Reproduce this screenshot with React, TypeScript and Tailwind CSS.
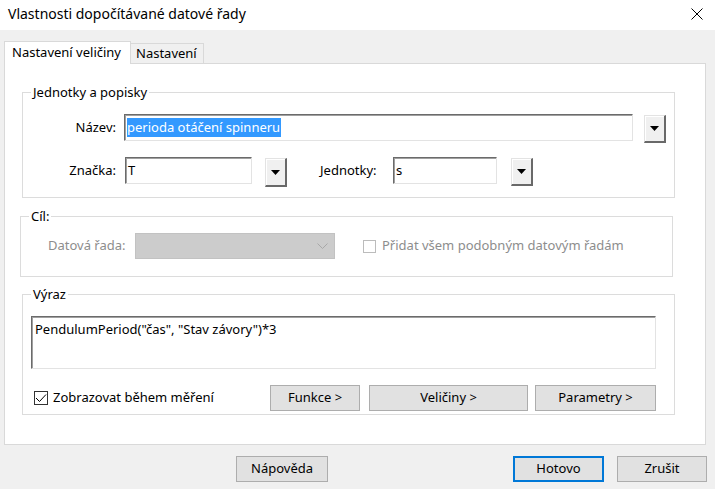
import React from "react";

const font = { fontFamily: '"Noto Sans", "Open Sans", Arial, sans-serif' };

function DropButton({ className = "" }: { className?: string }) {
  return (
    <div
      className={`w-[22px] h-[28px] bg-[#f0f0f0] border border-[#e3e3e3] border-r-[#696969] border-b-[#696969] border-r-2 border-b-2 shadow-[inset_1px_1px_0_#ffffff] flex items-center justify-center ${className}`}
    >
      <svg width="9" height="5" viewBox="0 0 9 5">
        <path d="M0 0 H9 L4.5 5 Z" fill="#000" />
      </svg>
    </div>
  );
}

function Input({ className = "", children }: { className?: string; children?: React.ReactNode }) {
  return (
    <div
      className={`h-[27px] bg-white border border-[#e3e3e3] border-t-[#6b6b6b] border-l-[#6b6b6b] shadow-[inset_1px_1px_0_#a0a0a0] flex items-center pl-[2px] text-[13px] text-black ${className}`}
    >
      {children}
    </div>
  );
}

function Btn({
  className = "",
  edge = "border border-[#adadad]",
  children,
}: {
  className?: string;
  edge?: string;
  children: React.ReactNode;
}) {
  return (
    <div
      className={`h-[26px] bg-[#e1e1e1] ${edge} flex items-center justify-center text-[13px] text-black ${className}`}
    >
      {children}
    </div>
  );
}

export default function App() {
  return (
    <div className="w-[715px] h-[489px] bg-[#f0f0f0] text-black overflow-hidden" style={font}>
      {/* title bar */}
      <div className="h-[30px] bg-white flex items-center justify-between pl-[8px] pr-[12px] pb-[4px]">
        <span className="text-[14px]">Vlastnosti dopočítávané datové řady</span>
        <svg width="12" height="12" viewBox="0 0 12 12" className="mt-[2px]">
          <path d="M0.5 0.5 L11.5 11.5 M11.5 0.5 L0.5 11.5" stroke="#000" strokeWidth="1" />
        </svg>
      </div>

      {/* tabs */}
      <div className="pl-[4px] pt-[10px]">
        <div className="flex items-end h-[23px]">
          <div className="relative z-10 h-[23px] -mb-px bg-white border border-[#d9d9d9] border-b-0 px-[7px] flex items-center text-[13px] w-[127px]">
            Nastavení veličiny
          </div>
          <div className="h-[20px] bg-[#f0f0f0] border border-[#d9d9d9] border-l-0 border-b-0 px-[5px] flex items-center text-[13px] w-[73px]">
            Nastavení
          </div>
        </div>

        {/* panel */}
        <div className="w-[702px] h-[382px] bg-white border border-[#d9d9d9] pt-[20px]">
          {/* Jednotky a popisky */}
          <fieldset className="ml-[17px] w-[653px] h-[114px] border border-[#dcdcdc] pt-[14px]">
            <legend className="ml-[8px] px-[2px] text-[13px] leading-[16px]">Jednotky a popisky</legend>
            <div className="flex items-start">
              <div className="w-[93px] h-[27px] flex items-center justify-end text-[13px]">Název:</div>
              <Input className="ml-[8px] w-[509px]">
                <span className="bg-[#3399ff] text-white leading-[19px] pr-[1px]">perioda otáčení spinneru</span>
              </Input>
              <DropButton className="ml-[11px] mt-[1px]" />
            </div>
            <div className="flex items-start mt-[14px]">
              <div className="w-[93px] h-[27px] flex items-center justify-end text-[13px]">Značka:</div>
              <Input className="ml-[9px] w-[127px]">T</Input>
              <DropButton className="ml-[13px] mt-[1px] h-[29px]" />
              <div className="ml-[33px] w-[73px] h-[27px] flex items-center text-[13px]">Jednotky:</div>
              <Input className="w-[104px]">s</Input>
              <DropButton className="ml-[14px] mt-[1px]" />
            </div>
          </fieldset>

          {/* Cíl */}
          <fieldset className="mt-[10px] ml-[15px] w-[653px] h-[69px] border border-[#dcdcdc] pt-[9px]">
            <legend className="ml-[8px] px-[2px] text-[13px] leading-[16px]">Cíl:</legend>
            <div className="flex items-center">
              <div className="ml-[27px] w-[87px] text-[13px] text-[#8d8d8d]">Datová řada:</div>
              <div className="w-[200px] h-[26px] bg-[#cccccc] border border-[#c2c2c2] flex items-center justify-end pr-[6px]">
                <svg width="11" height="6" viewBox="0 0 11 6">
                  <path d="M0.5 0.5 L5.5 5.5 L10.5 0.5" fill="none" stroke="#a8a8a8" strokeWidth="1" />
                </svg>
              </div>
              <div className="ml-[28px] w-[13px] h-[13px] border border-[#bcbcbc] bg-white" />
              <div className="ml-[6px] text-[13px] text-[#8d8d8d]">Přidat všem podobným datovým řadám</div>
            </div>
          </fieldset>

          {/* Výraz */}
          <fieldset className="mt-[9px] ml-[17px] w-[653px] h-[129px] border border-[#dcdcdc] pt-[14px]">
            <legend className="ml-[8px] px-[2px] text-[13px] leading-[16px]">Výraz</legend>
            <div className="ml-[8px] w-[625px] h-[53px] bg-white border border-[#e3e3e3] border-t-[#6b6b6b] border-l-[#6b6b6b] shadow-[inset_1px_1px_0_#a0a0a0] pl-[3px] pt-[3px] text-[13px] leading-[18px]">
              PendulumPeriod("čas", "Stav závory")*3
            </div>
            <div className="flex items-center mt-[16px] h-[26px] pr-[18px]">
              <div className="ml-[11px] w-[14px] h-[14px] border border-[#333333] bg-white flex items-center justify-center">
                <svg width="12" height="10" viewBox="0 0 12 10">
                  <path d="M1 5 L4.5 8.5 L11 1.5" fill="none" stroke="#000" strokeWidth="1" />
                </svg>
              </div>
              <div className="ml-[5px] text-[13px]">Zobrazovat během měření</div>
              <div className="ml-auto flex items-center">
                <Btn className="w-[90px]">Funkce &gt;</Btn>
                <Btn className="ml-[9px] w-[159px]">Veličiny &gt;</Btn>
                <Btn className="ml-[7px] w-[121px]">Parametry &gt;</Btn>
              </div>
            </div>
          </fieldset>
        </div>
      </div>

      {/* bottom buttons */}
      <div className="flex items-center mt-[11px]">
        <Btn className="ml-[236px] w-[92px]">Nápověda</Btn>
        <Btn className="ml-[185px] w-[91px]" edge="border-2 border-[#0078d7]">
          Hotovo
        </Btn>
        <Btn className="ml-[13px] w-[90px]">Zrušit</Btn>
      </div>
    </div>
  );
}
